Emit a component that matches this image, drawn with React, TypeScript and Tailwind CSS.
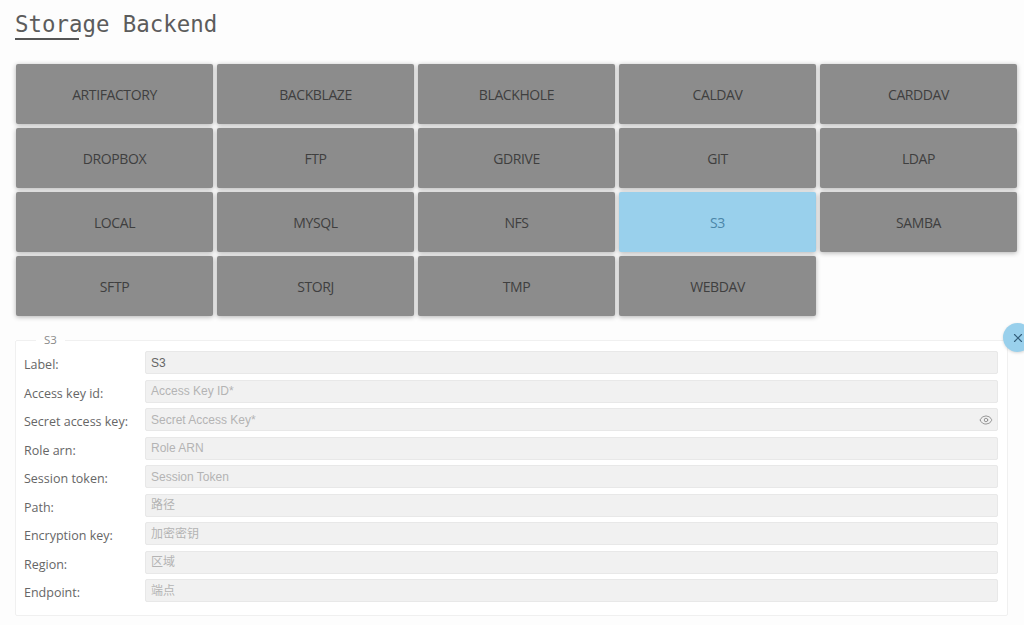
import { Eye, X } from 'lucide-react';

const backends = [
  'ARTIFACTORY', 'BACKBLAZE', 'BLACKHOLE', 'CALDAV', 'CARDDAV',
  'DROPBOX', 'FTP', 'GDRIVE', 'GIT', 'LDAP',
  'LOCAL', 'MYSQL', 'NFS', 'S3', 'SAMBA',
  'SFTP', 'STORJ', 'TMP', 'WEBDAV',
];

const fields = [
  { label: 'Label:', value: 'S3' },
  { label: 'Access key id:', placeholder: 'Access Key ID*' },
  { label: 'Secret access key:', placeholder: 'Secret Access Key*', secret: true },
  { label: 'Role arn:', placeholder: 'Role ARN' },
  { label: 'Session token:', placeholder: 'Session Token' },
  { label: 'Path:', placeholder: '路径' },
  { label: 'Encryption key:', placeholder: '加密密钥' },
  { label: 'Region:', placeholder: '区域' },
  { label: 'Endpoint:', placeholder: '端点' },
];

export default function App() {
  return (
    <div className="h-[625px] overflow-hidden bg-[#fdfdfd] pl-4 font-['Open_Sans','Noto_Sans',sans-serif] text-[#555]">
      <div className="h-[64px] pt-[9px]">
        <h1 className="relative -ml-px w-fit font-['DejaVu_Sans_Mono',monospace] text-[22.4px] leading-[30px] font-normal text-[#5c5c5c]">
          Storage Backend
          <span className="absolute top-[29px] left-0 h-[2px] w-[64px] bg-[#555]" />
        </h1>
      </div>

      <div className="grid w-[1001px] grid-cols-5 gap-1">
        {backends.map(name => (
          <button
            key={name}
            className={`flex h-[60px] items-center justify-center rounded-[2px] text-[14px] tracking-[-0.4px] shadow-[0_1px_5px_rgba(0,0,0,0.3)] ${
              name === 'S3' ? 'bg-[#99d0ec] text-[#4b86a8]' : 'bg-[#8c8c8c] text-[#3f3f3f]'
            }`}
          >
            {name}
          </button>
        ))}
      </div>

      <div className="relative mt-[16px] -ml-px w-[993px]">
        <fieldset className="h-[284px] rounded-[2px] border border-[#f0f0f0] bg-white pt-[3px] pr-[9px] pl-[8px]">
          <legend className="ml-[12px] px-2 text-[11.5px] leading-[16px] text-[#8a8a8a]">S3</legend>
          <div className="flex flex-col gap-[5.5px]">
            {fields.map(f => (
              <div key={f.label} className="flex h-[23px] items-center">
                <label className="mt-[6px] w-[121px] shrink-0 text-[12.5px] text-[#666]">{f.label}</label>
                <div className="relative flex h-[23px] flex-1 items-center rounded-[2px] border border-[#e8e8e8] bg-[#f1f1f1] px-[5px] font-['Liberation_Sans','Noto_Sans_CJK_SC',sans-serif] text-[12px]">
                  <span className={f.value ? 'text-[#666]' : 'text-[#b4b4b4]'}>{f.value ?? f.placeholder}</span>
                  {f.secret && <Eye className="absolute right-[4px] h-[14px] w-[14px] text-[#8a8a8a]" strokeWidth={1.5} />}
                </div>
              </div>
            ))}
          </div>
        </fieldset>
        <button className="absolute top-[-9px] right-[-24px] flex h-[29px] w-[29px] items-center justify-center rounded-full bg-[#99d0ec] text-[#35607c] shadow-[0_1px_3px_rgba(0,0,0,0.15)]">
          <X className="h-[14px] w-[14px]" strokeWidth={2} />
        </button>
      </div>
    </div>
  );
}
